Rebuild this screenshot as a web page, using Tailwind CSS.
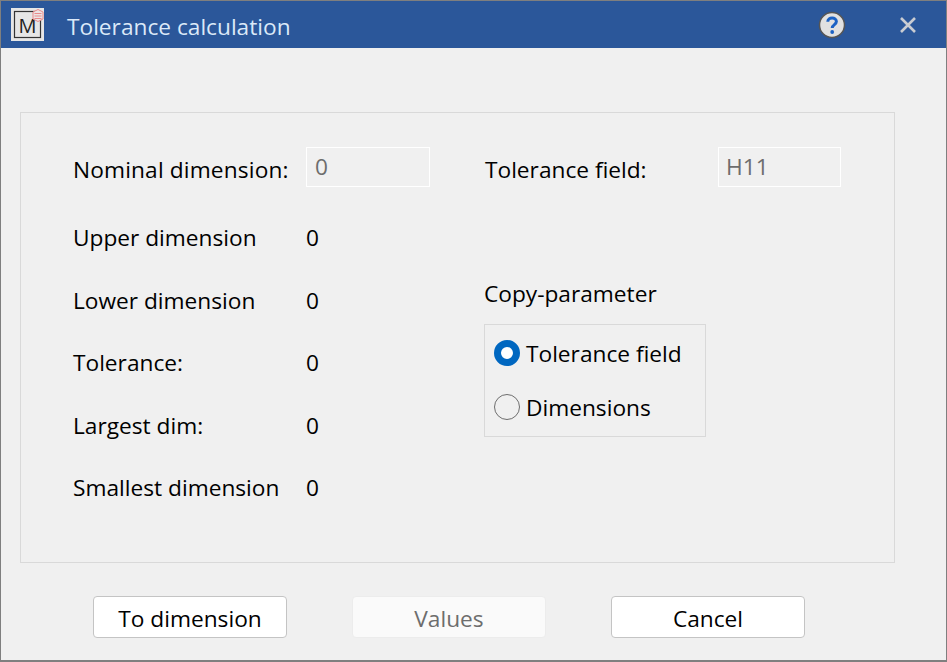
<!DOCTYPE html>
<html lang="en">
<head>
    <meta charset="UTF-8">
    <script src="https://cdn.jsdelivr.net/npm/@tailwindcss/browser@4"></script>
    <title>Tolerance calculation</title>
</head>

<body class="bg-[#f0f0f0]">
    <div class="w-[947px] h-[662px] flex flex-col bg-[#f0f0f0] border-t border-x-[1px] border-b-[2px] border-[#7f7f7f] font-['Open_Sans',sans-serif] text-[22.7px] text-black overflow-hidden">

        <!-- title bar -->
        <div class="h-[47px] shrink-0 flex items-center bg-[#2b579a]">
            <svg class="ml-[10px] shrink-0" width="33" height="33" viewBox="0 0 33 33">
                <rect width="33" height="33" fill="#e6e6e6"/>
                <rect x="3.5" y="3.5" width="26" height="26" fill="none" stroke="#333" stroke-width="1.2"/>
                <text x="16.5" y="24.5" text-anchor="middle" font-family="Open Sans" font-size="20" fill="#222">M</text>
                <path d="M27 1.5L32 4V11L27 13.5L22 11V4Z" fill="#ece4e4" stroke="#ea8a8a" stroke-width="1"/>
                <path d="M23.5 5.5H30.5M23.5 8H30.5M23.5 10.5H30.5" fill="none" stroke="#ea8a8a" stroke-width="1"/>
            </svg>
            <span class="ml-[23px] pt-[6px] text-[#dbe9f8]">Tolerance calculation</span>
            <svg class="ml-auto" width="28" height="28" viewBox="0 0 28 28">
                <circle cx="14" cy="14" r="12.5" fill="#e1e1e1" stroke="#555" stroke-width="1.5"/>
                <path d="M9.8 10.8 C9.8 5.8 18.4 5.8 18.4 10.6 C18.4 13.6 14.2 13.6 14.2 17" fill="none" stroke="#1c62c4" stroke-width="3"/>
                <circle cx="14.2" cy="21" r="1.9" fill="#1c62c4"/>
            </svg>
            <svg class="ml-[53px] mr-[29px]" width="18" height="18" viewBox="0 0 18 18">
                <path d="M2 2 L16 16 M16 2 L2 16" stroke="#c9ccd2" stroke-width="2.6"/>
            </svg>
        </div>

        <!-- group box -->
        <div class="ml-[19px] mr-[51px] mt-[64px] w-[875px] h-[451px] shrink-0 border border-[#d9d9d9] flex pl-[52px] pt-[34px]">
            <div class="w-[411px] shrink-0 flex flex-col">
                <div class="h-10 flex items-center">
                    <span class="w-[233px] pt-[6px] tracking-[0.15px]">Nominal dimension:</span>
                    <div class="w-[124px] h-10 flex items-center pl-[8px] border border-white text-[#6d6d6d]">0</div>
                </div>
                <div class="h-10 flex items-center mt-[31px]"><span class="w-[233px]">Upper dimension</span><span>0</span></div>
                <div class="h-10 flex items-center mt-[23px]"><span class="w-[233px]">Lower dimension</span><span>0</span></div>
                <div class="h-10 flex items-center mt-[22px]"><span class="w-[233px]">Tolerance:</span><span>0</span></div>
                <div class="h-10 flex items-center mt-[23px]"><span class="w-[233px]">Largest dim:</span><span>0</span></div>
                <div class="h-10 flex items-center mt-[22px]"><span class="w-[233px]">Smallest dimension</span><span>0</span></div>
            </div>
            <div class="flex flex-col">
                <div class="h-10 flex items-center">
                    <span class="w-[234px] pl-[1px] pt-[6px]">Tolerance field:</span>
                    <div class="w-[123px] h-10 flex items-center pl-[7px] border border-white text-[#6d6d6d]">H11</div>
                </div>
                <div class="mt-[87px] h-10 flex items-center">Copy-parameter</div>
                <div class="mt-[10px] w-[222px] h-[113px] border border-[#d9d9d9] flex flex-col pl-[9px] pt-[8px]">
                    <div class="h-10 flex items-center gap-[6px]">
                        <span class="w-[26px] h-[26px] rounded-full border-[7px] border-[#0067c0] bg-white"></span>
                        <span class="pt-[2px]">Tolerance field</span>
                    </div>
                    <div class="h-10 mt-[14px] flex items-center gap-[6px]">
                        <span class="w-[26px] h-[26px] rounded-full border-[1.5px] border-[#6e6e6e]"></span>
                        <span class="pt-[2px]">Dimensions</span>
                    </div>
                </div>
            </div>
        </div>

        <!-- buttons -->
        <div class="flex ml-[92px] mt-[33px] gap-[65px]">
            <button class="w-[194px] h-[42px] pt-[4px] bg-white border border-[#c4c4c4] rounded-[4px]">To dimension</button>
            <button class="w-[194px] h-[42px] pt-[4px] bg-[#fafafa] border border-[#ececec] rounded-[4px] text-[#6d6d6d]">Values</button>
            <button class="w-[194px] h-[42px] pt-[4px] bg-white border border-[#c4c4c4] rounded-[4px]">Cancel</button>
        </div>
    </div>
</body>

</html>
